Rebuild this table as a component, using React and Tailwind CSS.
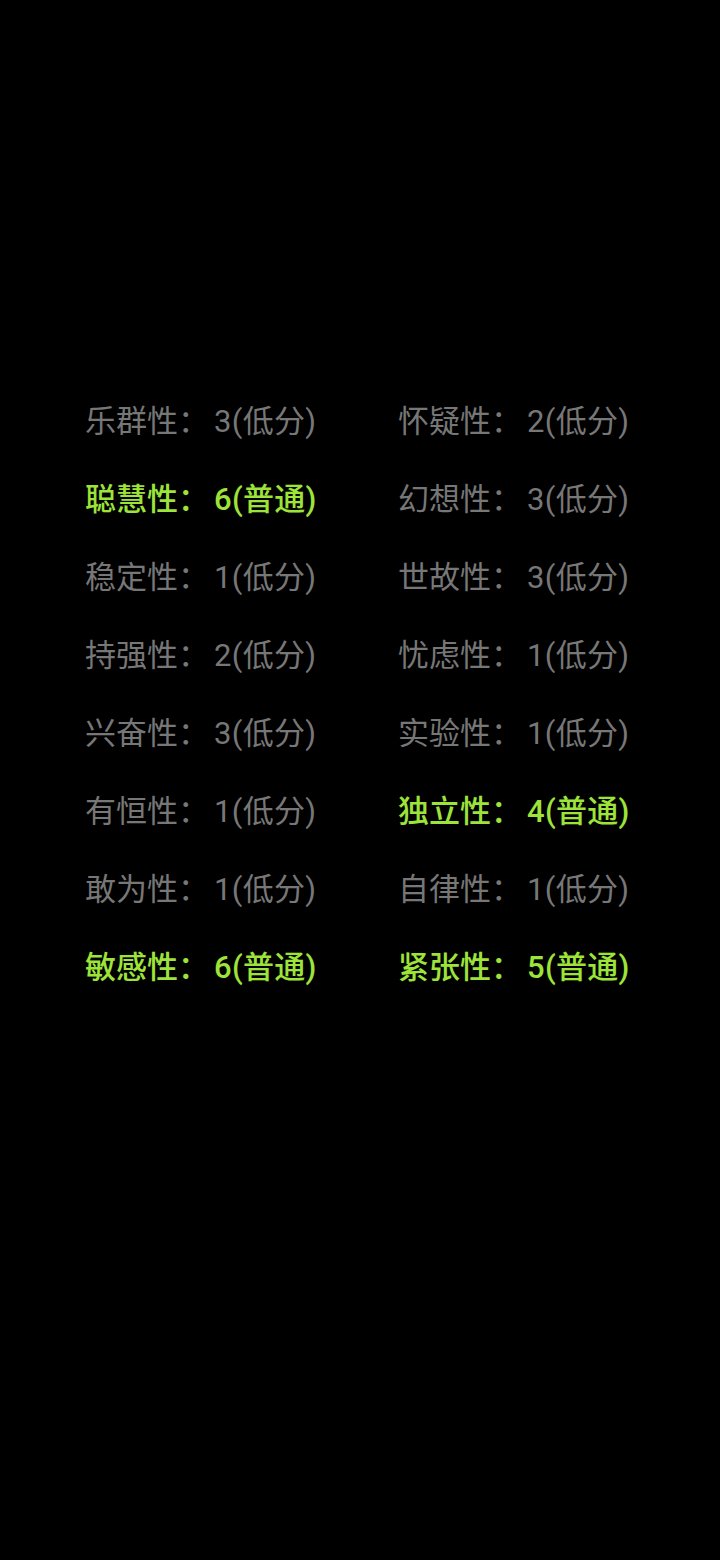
const traits = [
  ['乐群性', 3, '低分'],
  ['怀疑性', 2, '低分'],
  ['聪慧性', 6, '普通'],
  ['幻想性', 3, '低分'],
  ['稳定性', 1, '低分'],
  ['世故性', 3, '低分'],
  ['持强性', 2, '低分'],
  ['忧虑性', 1, '低分'],
  ['兴奋性', 3, '低分'],
  ['实验性', 1, '低分'],
  ['有恒性', 1, '低分'],
  ['独立性', 4, '普通'],
  ['敢为性', 1, '低分'],
  ['自律性', 1, '低分'],
  ['敏感性', 6, '普通'],
  ['紧张性', 5, '普通'],
];

export default function App() {
  return (
    <div
      className="w-[720px] h-[1560px] bg-black pt-[383px] pl-[85px]"
      style={{ fontFamily: 'Roboto, "Noto Sans CJK SC", sans-serif' }}
    >
      <div className="grid grid-cols-[313px_313px]">
        {traits.map(([name, score, level]) => (
          <div
            key={name}
            className={`h-[78px] leading-[78px] text-[31px] whitespace-nowrap ${
              level === '普通' ? 'text-[#9de33a] font-medium' : 'text-[#777777]'
            }`}
          >
            {name}：<span className="ml-[5px] tracking-[0.3px]">{score}({level})</span>
          </div>
        ))}
      </div>
    </div>
  );
}
